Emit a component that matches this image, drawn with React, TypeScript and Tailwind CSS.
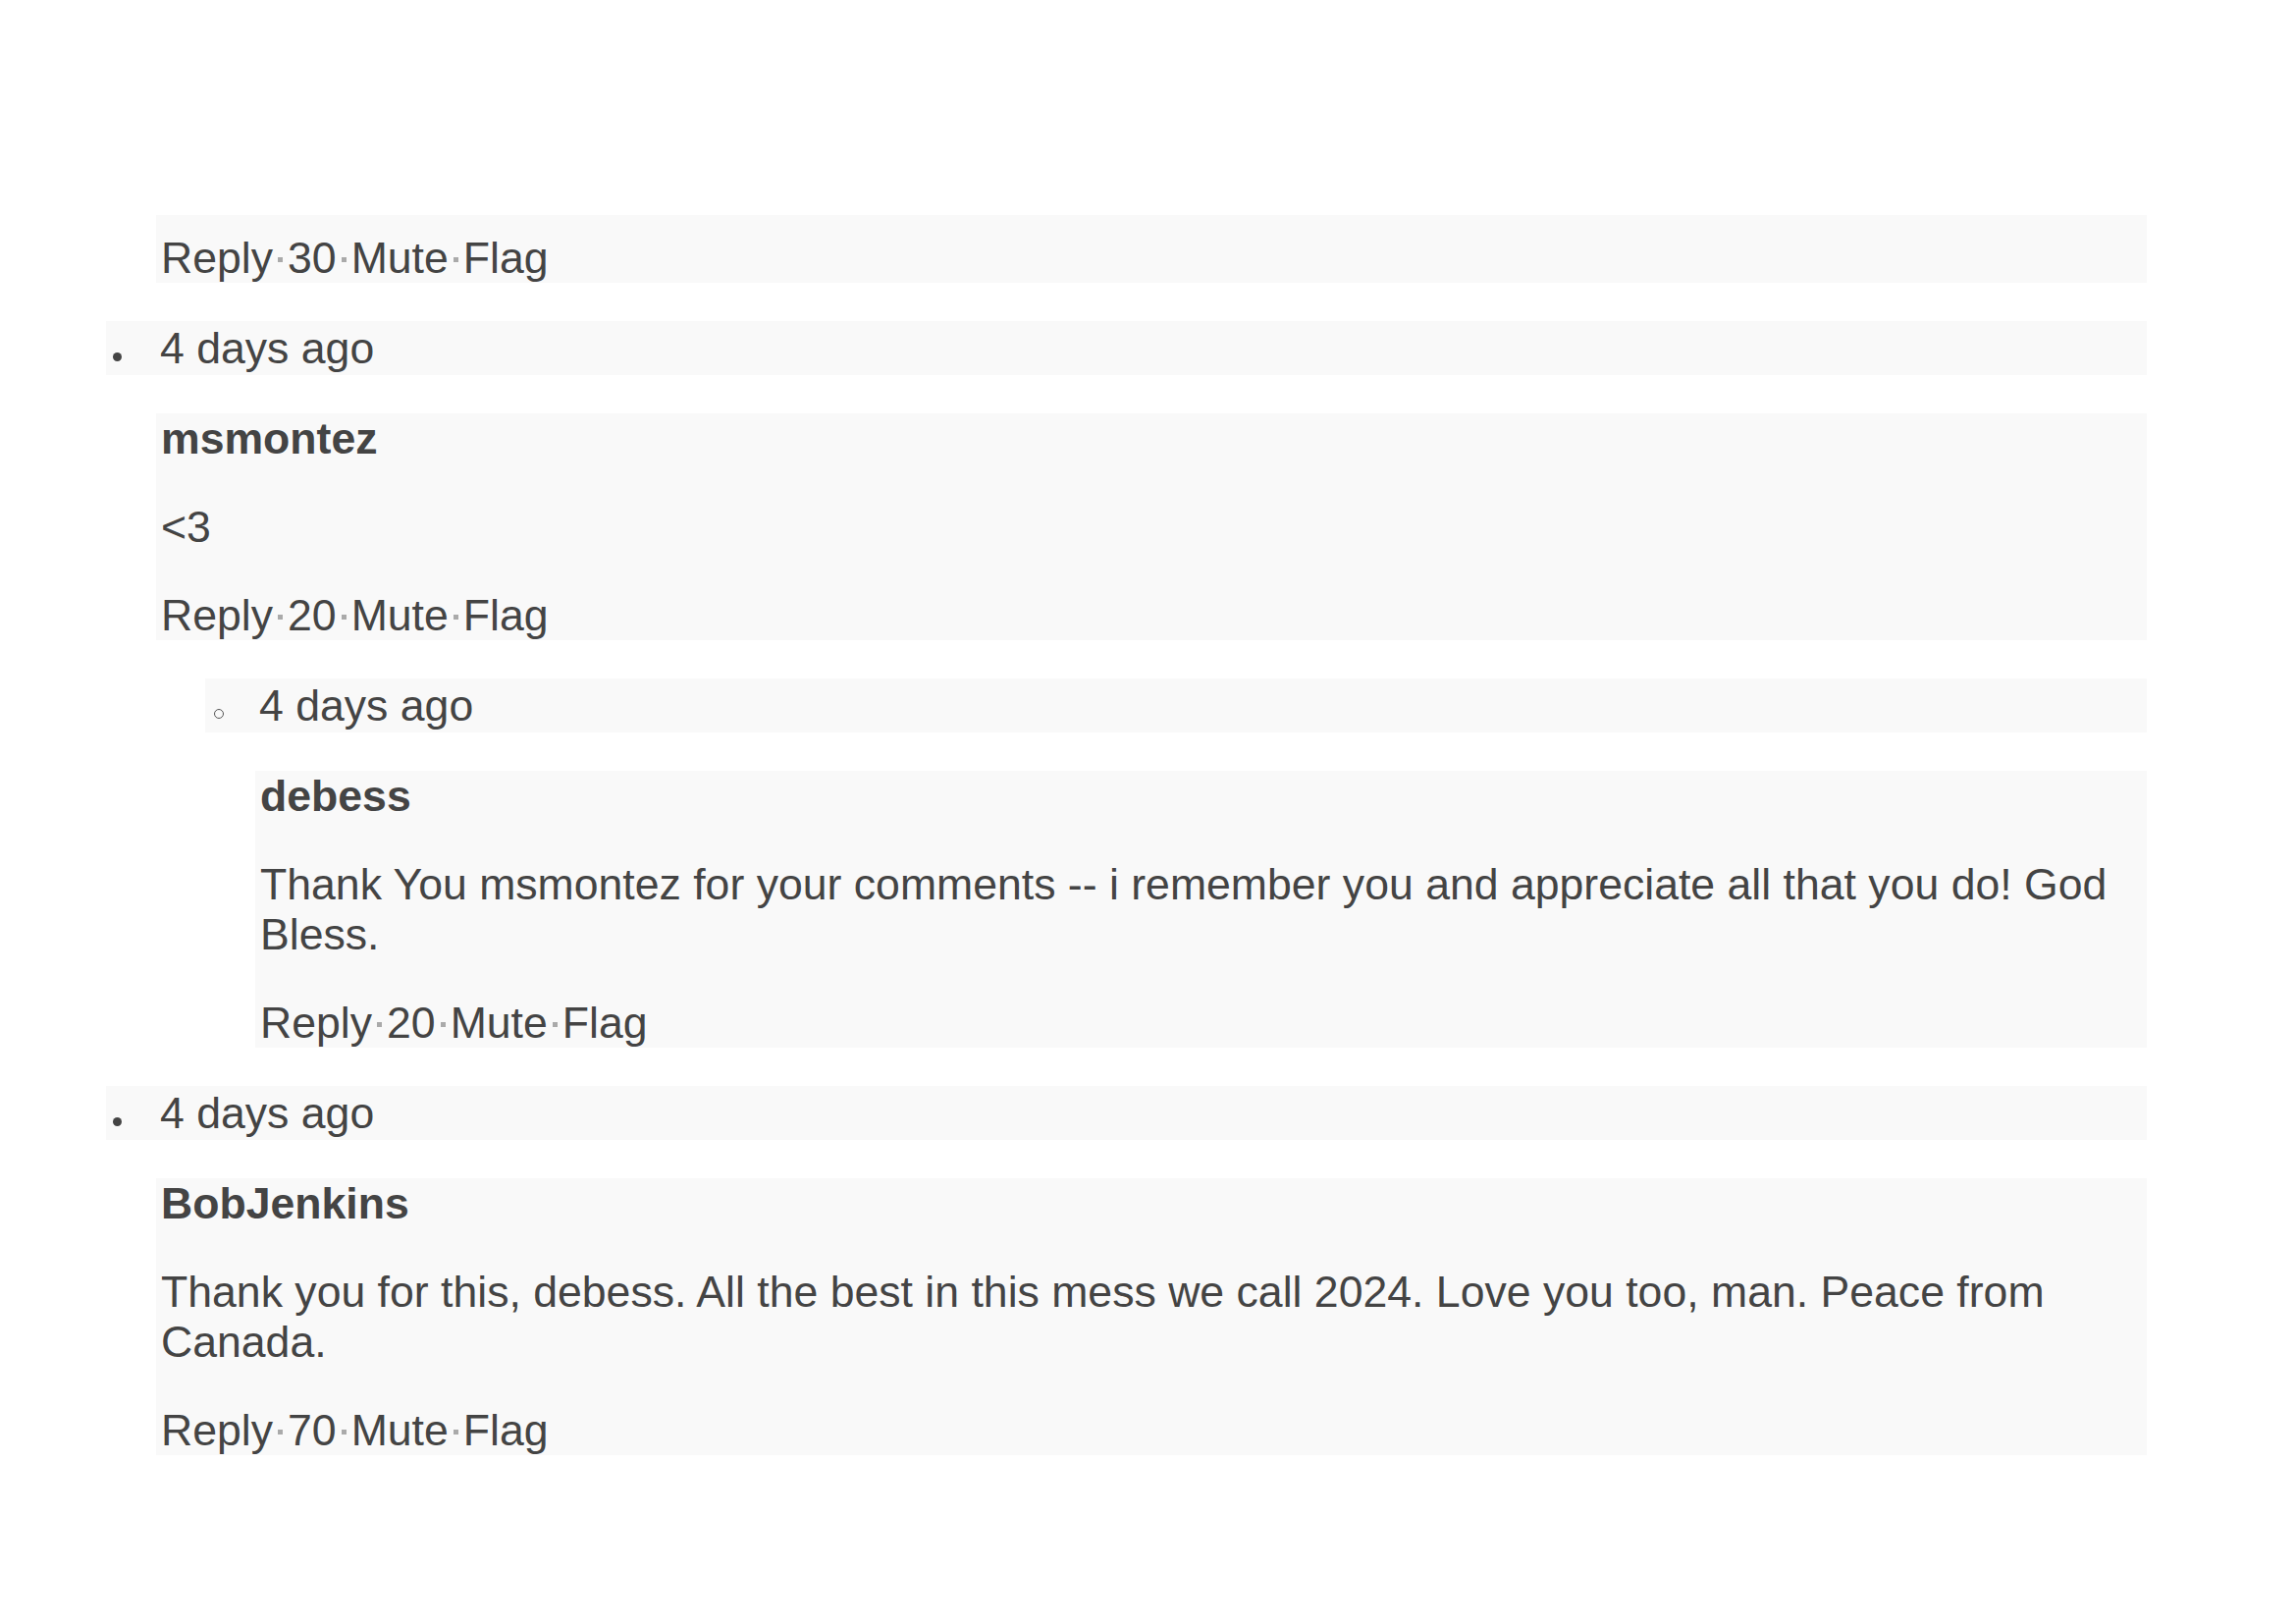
type Reply = {
  time: string;
  author: string;
  body: string;
  votes: number;
  replies?: Reply[];
};

const thread: Reply[] = [
  {
    time: "4 days ago",
    author: "msmontez",
    body: "<3",
    votes: 20,
    replies: [
      {
        time: "4 days ago",
        author: "debess",
        body: "Thank You msmontez for your comments -- i remember you and appreciate all that you do! God Bless.",
        votes: 20,
      },
    ],
  },
  {
    time: "4 days ago",
    author: "BobJenkins",
    body: "Thank you for this, debess. All the best in this mess we call 2024. Love you too, man. Peace from Canada.",
    votes: 70,
  },
];

export default function App() {
  return (
    <div className="min-h-screen bg-white pt-[219px] pl-[108px] pr-[152px] font-['Liberation_Sans',Arial,sans-serif] text-[44.6px] leading-[51px] text-[#444]">
      <div className="ml-[51px] bg-[#f9f9f9] pt-[18px] pl-[5px]">
        <Actions votes={30} />
      </div>
      <ul className="mt-[39px] flex flex-col gap-[39px]">
        {thread.map((c, i) => (
          <Comment key={i} c={c} depth={0} />
        ))}
      </ul>
    </div>
  );
}

function Comment({ c, depth }: { c: Reply; depth: number }) {
  return (
    <li className="flex flex-col gap-[39px]">
      <div className="flex items-start bg-[#f9f9f9] leading-[55px]">
        <span className="w-[55px] shrink-0">
          {depth === 0 ? (
            <span className="ml-[7px] mt-[32px] block h-[9px] w-[9px] rounded-full bg-[#444]" />
          ) : (
            <span className="ml-[9px] mt-[31px] block h-[10px] w-[10px] rounded-full border border-[#555]" />
          )}
        </span>
        <span>{c.time}</span>
      </div>
      <div className="ml-[51px] flex flex-col gap-[39px] bg-[#f9f9f9] pl-[5px]">
        <p className="font-bold">{c.author}</p>
        <p>{c.body}</p>
        <Actions votes={c.votes} />
      </div>
      {c.replies && (
        <ul className="ml-[101px] flex flex-col gap-[39px]">
          {c.replies.map((r, i) => (
            <Comment key={i} c={r} depth={depth + 1} />
          ))}
        </ul>
      )}
    </li>
  );
}

function Actions({ votes }: { votes: number }) {
  return (
    <p>
      Reply<Dot />{votes}<Dot />Mute<Dot />Flag
    </p>
  );
}

function Dot() {
  return <span className="mx-[5px] inline-block h-[5px] w-[5px] bg-[#aaa] align-[0.25em]" />;
}
